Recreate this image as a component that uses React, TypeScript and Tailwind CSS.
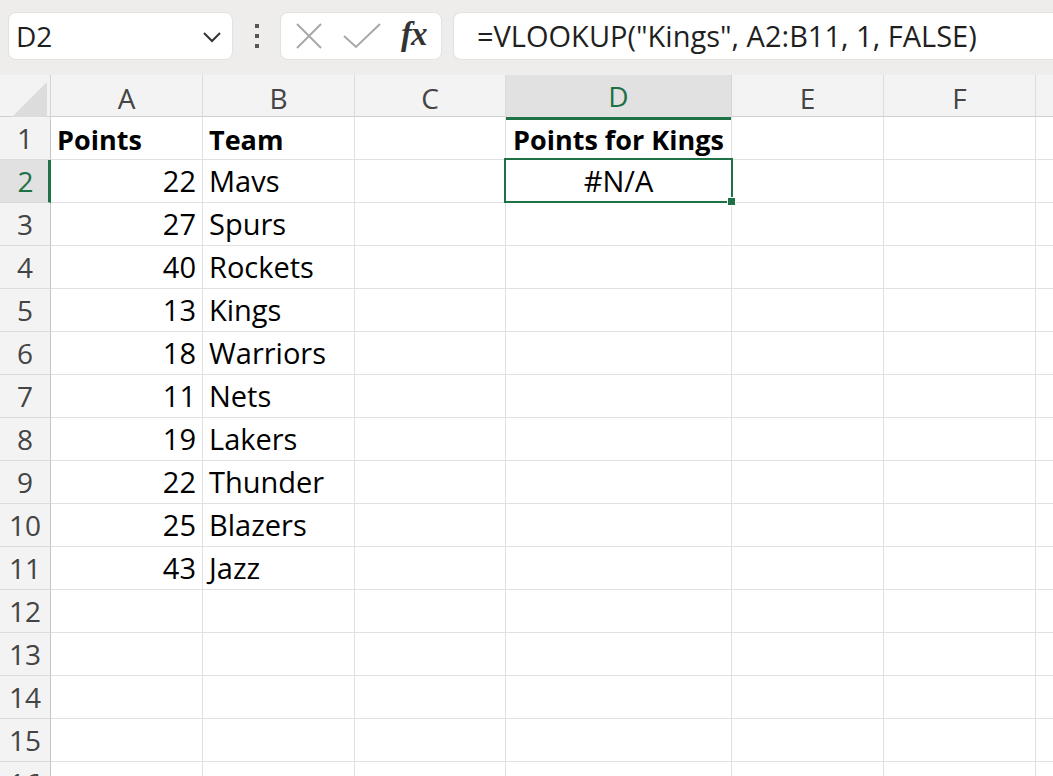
const COLS = ["A", "B", "C", "D", "E", "F"];

const rows: { pts?: string; team?: string; d?: string; bold?: boolean }[] = [
    { pts: "Points", team: "Team", d: "Points for Kings", bold: true },
    { pts: "22", team: "Mavs", d: "#N/A" },
    { pts: "27", team: "Spurs" },
    { pts: "40", team: "Rockets" },
    { pts: "13", team: "Kings" },
    { pts: "18", team: "Warriors" },
    { pts: "11", team: "Nets" },
    { pts: "19", team: "Lakers" },
    { pts: "22", team: "Thunder" },
    { pts: "25", team: "Blazers" },
    { pts: "43", team: "Jazz" },
    {}, {}, {}, {}, {},
];

const gridCols = "grid grid-cols-[51px_152px_152px_151px_226px_152px_152px_1fr]";

function Toolbar() {
    return (
        <div className="h-[75px] bg-[#efedeb] flex items-start pt-[12px] pl-[8px] gap-0">
            <div className="w-[225px] h-[48px] bg-white rounded-[8px] border border-[#e4e2e0] flex items-center pl-[7px] pr-[10px]">
                <span className="flex-grow text-[28px] text-[#1f1f1f]">D2</span>
                <svg width="20" height="12" viewBox="0 0 20 12" className="mt-[2px]">
                    <path d="M2 2 L10 10 L18 2" fill="none" stroke="#333" strokeWidth="2" />
                </svg>
            </div>
            <div className="w-[47px] h-[48px] flex flex-col items-center justify-center gap-[6px]">
                <span className="block w-[4px] h-[4px] bg-[#555]"></span>
                <span className="block w-[4px] h-[4px] bg-[#555]"></span>
                <span className="block w-[4px] h-[4px] bg-[#555]"></span>
            </div>
            <div className="w-[162px] h-[48px] bg-white rounded-[8px] border border-[#e4e2e0] flex items-center pl-[14px] gap-[20px]">
                <svg width="28" height="28" viewBox="0 0 28 28">
                    <path d="M2 2 L26 26 M26 2 L2 26" fill="none" stroke="#a8a8a8" strokeWidth="2" />
                </svg>
                <svg width="38" height="26" viewBox="0 0 38 26">
                    <path d="M1 13 L13 24 L37 1" fill="none" stroke="#a8a8a8" strokeWidth="2" />
                </svg>
                <span className="text-[33px] italic font-bold text-[#333] leading-none -mt-[4px] font-['Liberation_Serif',serif] tracking-[-1px]">fx</span>
            </div>
            <div className="ml-[11px] flex-grow h-[48px] bg-white rounded-l-[8px] border border-r-0 border-[#e4e2e0] flex items-center pl-[23px]">
                <span className="text-[29px] text-[#1f1f1f] whitespace-nowrap">=VLOOKUP("Kings", A2:B11, 1, FALSE)</span>
            </div>
        </div>
    );
}

function HeaderRow() {
    return (
        <div className={`${gridCols} h-[42px] bg-[#f3f3f3] border-b border-[#cfcfcf]`}>
            <div className="relative border-r border-[#d4d4d4] flex items-end justify-end pr-[3px] pb-[3px]">
                <svg width="35" height="35" viewBox="0 0 35 35">
                    <path d="M35 0 L35 35 L0 35 Z" fill="#dcdcdc" />
                </svg>
            </div>
            {COLS.map((c) => (
                <div
                    key={c}
                    className={
                        c === "D"
                            ? "bg-[#e1e1e1] border-r border-[#d4d4d4] border-b-[3px] border-b-[#1e7145] flex items-center justify-center text-[28px] text-[#1e7145]"
                            : "border-r border-[#dcdcdc] flex items-center justify-center text-[28px] text-[#444]"
                    }
                >
                    {c}
                </div>
            ))}
            <div></div>
        </div>
    );
}

export default function App() {
    return (
        <div className="w-[1053px] h-[776px] overflow-hidden bg-white font-['Open_Sans',sans-serif]">
            <Toolbar />
            <HeaderRow />
            {rows.map((r, i) => {
                const n = i + 1;
                const sel = n === 2;
                const text = r.bold ? "font-bold text-[27px]" : "text-[29px]";
                return (
                    <div key={n} className={`${gridCols} h-[43px]`}>
                        <div
                            className={
                                sel
                                    ? "bg-[#e1e1e1] border-r-[3px] border-[#1e7145] border-b border-b-[#d6d6d6] flex items-center justify-center pl-[3px] text-[28px] text-[#1e7145]"
                                    : "bg-[#f3f3f3] border-r border-[#c6c6c6] border-b border-b-[#dcdcdc] flex items-center justify-center text-[28px] text-[#444]"
                            }
                        >
                            {n}
                        </div>
                        <div className={`border-r border-b border-[#e1e1e1] flex items-end pb-[2px] px-[6px] text-black leading-[1.3] ${r.bold ? "justify-start" : "justify-end"} ${text}`}>
                            {r.pts}
                        </div>
                        <div className={`border-r border-b border-[#e1e1e1] flex items-end pb-[2px] px-[6px] text-black leading-[1.3] ${text}`}>
                            {r.team}
                        </div>
                        <div className="border-r border-b border-[#e1e1e1]"></div>
                        <div className={`relative border-r border-b border-[#e1e1e1] flex items-end justify-center pb-[2px] text-black leading-[1.3] ${text}`}>
                            {r.d}
                            {sel && (
                                <>
                                    <div className="absolute z-10 -top-[2px] -left-[2px] -right-[2px] -bottom-[1px] border-2 border-[#1e7145]"></div>
                                    <div className="absolute z-20 -right-[5px] -bottom-[4px] w-[9px] h-[9px] bg-[#1e7145] border border-white"></div>
                                </>
                            )}
                        </div>
                        <div className="border-r border-b border-[#e1e1e1]"></div>
                        <div className="border-r border-b border-[#e1e1e1]"></div>
                        <div className="border-b border-[#e1e1e1]"></div>
                    </div>
                );
            })}
        </div>
    );
}
